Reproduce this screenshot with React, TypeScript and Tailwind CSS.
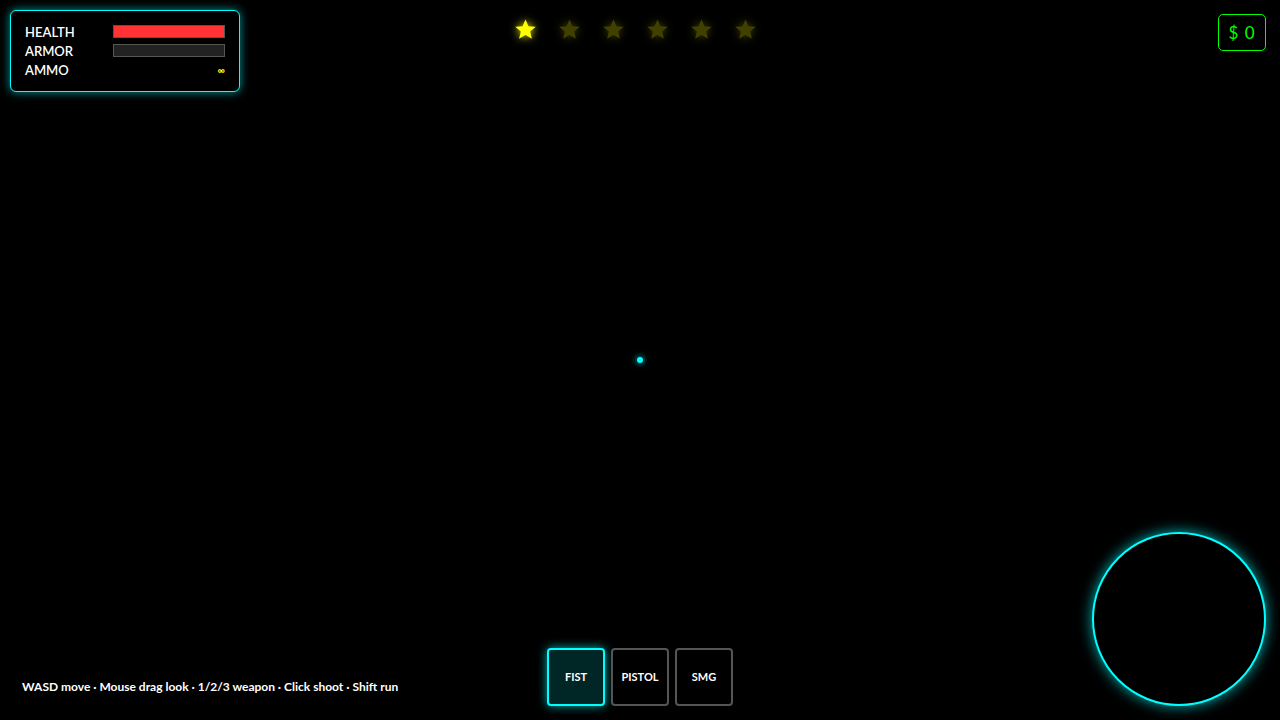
const STARS = 6
const WANTED = 1

const WEAPONS = ["FIST", "PISTOL", "SMG"]

function Star({ lit }: { lit: boolean }) {
  return (
    <svg
      viewBox="0 0 24 24"
      className={
        lit
          ? "w-[23px] h-[23px] drop-shadow-[0_0_4px_rgba(255,255,0,0.9)]"
          : "w-[23px] h-[23px] drop-shadow-[0_0_4px_rgba(255,255,0,0.25)]"
      }
    >
      <path
        d="M12 1.5l3.1 7.1 7.6.6-5.8 5 1.8 7.5L12 17.7l-6.7 4 1.8-7.5-5.8-5 7.6-.6z"
        fill={lit ? "#ffff00" : "#404000"}
      />
    </svg>
  )
}

export default function App() {
  return (
    <div
      className="relative w-screen h-screen overflow-hidden bg-black text-white"
      style={{ fontFamily: 'Lato, "DejaVu Sans", sans-serif' }}
    >
      {/* Stats panel */}
      <div className="absolute top-[10px] left-[10px] w-[230px] h-[82px] rounded-[6px] border border-[#00ffff] bg-black shadow-[0_0_10px_rgba(0,255,255,0.6)] px-[14px] pt-[14px] flex flex-col gap-[7px]">
        <div className="flex items-center justify-between h-[12px]">
          <span className="text-[13px] font-semibold leading-none pt-[3px]">HEALTH</span>
          <div className="w-[112px] h-[13px] border border-[#555] bg-[#ff3333]" />
        </div>
        <div className="flex items-center justify-between h-[12px]">
          <span className="text-[13px] font-semibold leading-none pt-[3px]">ARMOR</span>
          <div className="w-[112px] h-[13px] border border-[#555] bg-[#222]" />
        </div>
        <div className="flex items-center justify-between h-[12px]">
          <span className="text-[13px] font-semibold leading-none pt-[3px]">AMMO</span>
          <span className="text-[10px] leading-none font-bold text-[#ffff00] pt-[2px]">∞</span>
        </div>
      </div>

      {/* Wanted level */}
      <div className="absolute top-[18px] left-[514px] flex gap-[21px]">
        {Array.from({ length: STARS }).map((_, i) => (
          <Star key={i} lit={i < WANTED} />
        ))}
      </div>

      {/* Cash */}
      <div className="absolute top-[14px] right-[14px] w-[48px] h-[37px] rounded-[5px] border border-[#00ff00] flex items-center justify-center text-[#00ff00] text-[17px] tracking-[1px]">
        $ 0
      </div>

      {/* Crosshair */}
      <div className="absolute top-[357px] left-[637px] w-[6px] h-[6px] rounded-full bg-[#00ffff] shadow-[0_0_6px_#00ffff]" />

      {/* Controls hint */}
      <div className="absolute left-[22px] top-[681px] text-[12px] font-bold leading-none">
        WASD move · Mouse drag look · 1/2/3 weapon · Click shoot · Shift run
      </div>

      {/* Weapon slots */}
      <div className="absolute left-[547px] top-[648px] flex gap-[6px]">
        {WEAPONS.map((w, i) => (
          <div
            key={w}
            className={
              i === 0
                ? "w-[58px] h-[58px] rounded-[4px] border-2 border-[#00ffff] bg-[#002626] shadow-[0_0_10px_rgba(0,255,255,0.7)] flex items-center justify-center text-[11px] font-bold"
                : "w-[58px] h-[58px] rounded-[4px] border-2 border-[#555] bg-black flex items-center justify-center text-[11px] font-bold"
            }
          >
            {w}
          </div>
        ))}
      </div>

      {/* Minimap */}
      <div className="absolute left-[1092px] top-[532px] w-[174px] h-[174px] rounded-full border-2 border-[#00ffff] bg-black shadow-[0_0_14px_rgba(0,255,255,0.7)]" />
    </div>
  )
}
